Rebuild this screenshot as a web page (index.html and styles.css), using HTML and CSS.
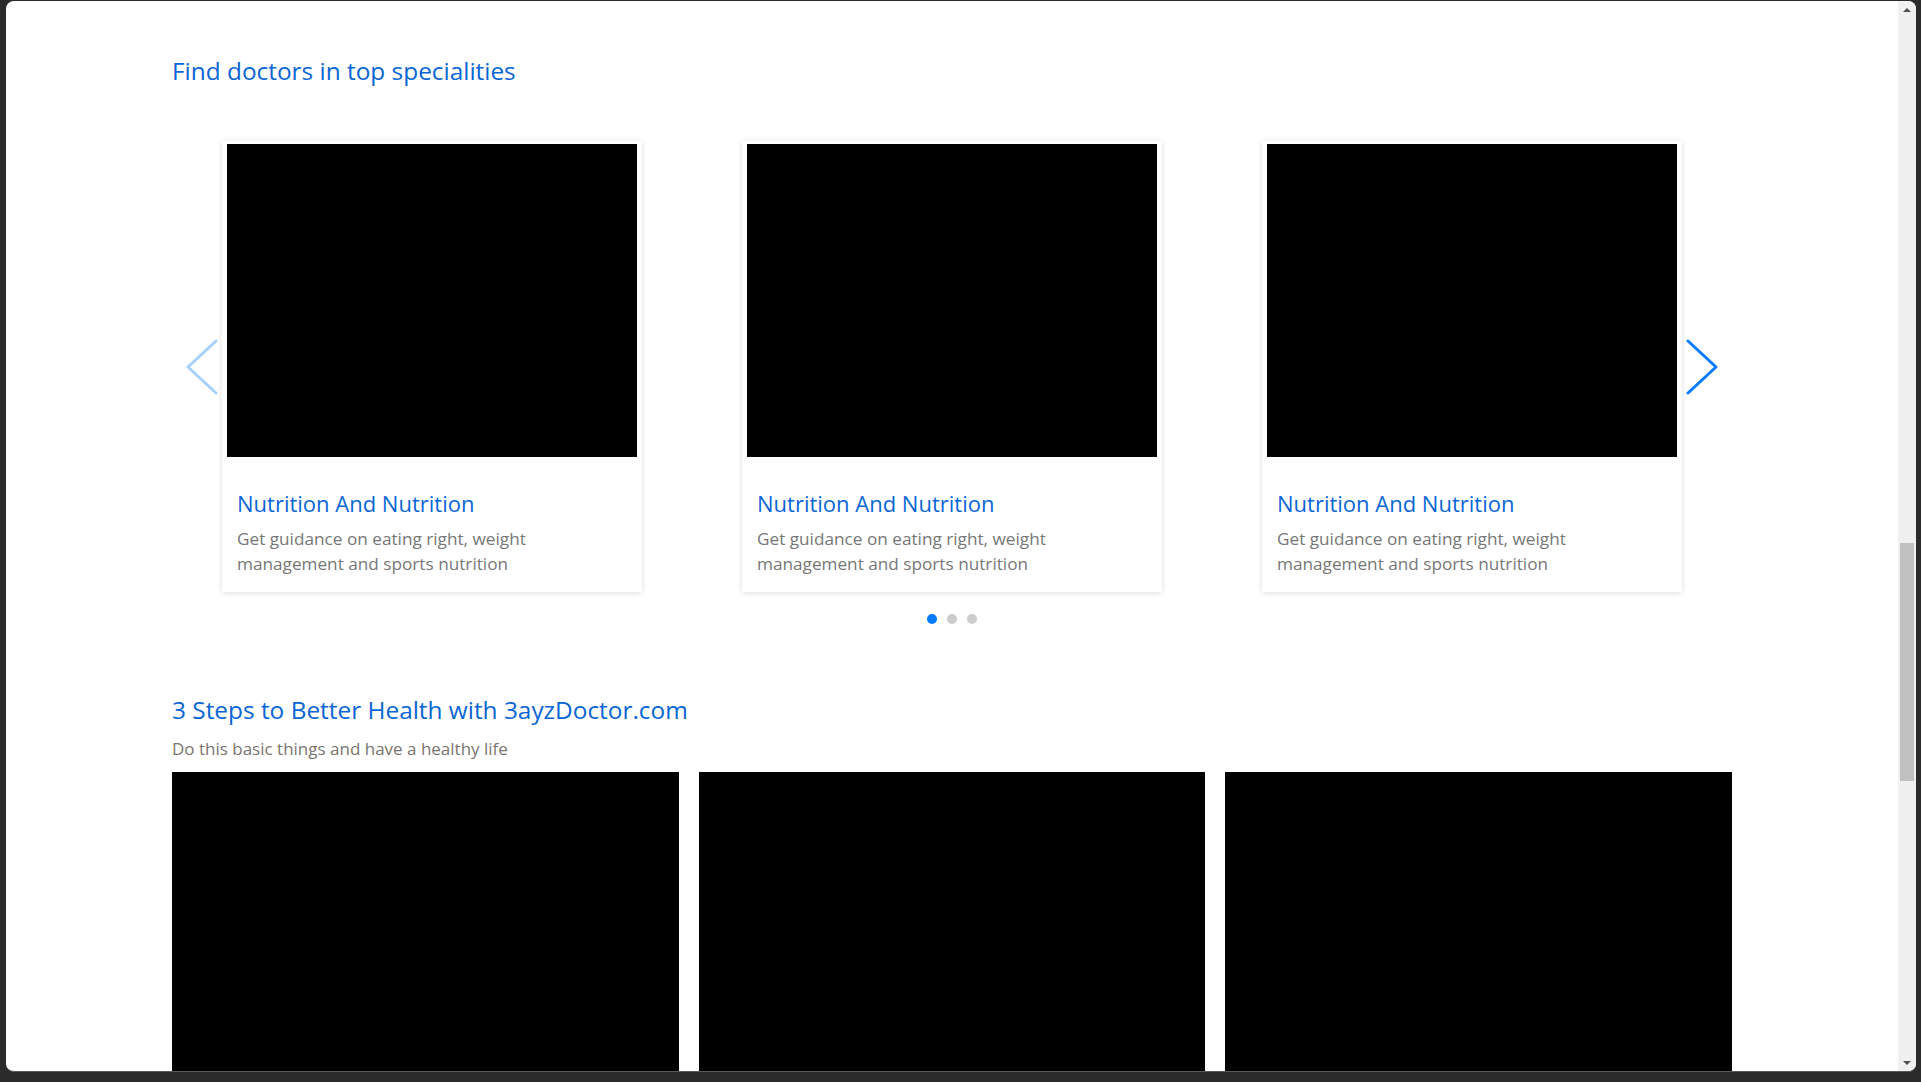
FILE: index.html
```html
<!DOCTYPE html>
<html lang="en">
<head>
<meta charset="utf-8">
<title>3ayzDoctor</title>
<link rel="stylesheet" href="styles.css">
</head>
<body>
<div class="window">
  <div class="viewport">
    <section class="specialities">
      <div class="container">
        <h2 class="section-title">Find doctors in top specialities</h2>
        <div class="carousel">
          <div class="carousel-stage">
            <div class="track">
              <div class="slide">
                <div class="card">
                  <div class="card-img"></div>
                  <div class="card-body">
                    <h3 class="card-title">Nutrition And Nutrition</h3>
                    <p class="card-text">Get guidance on eating right, weight management and sports nutrition</p>
                  </div>
                </div>
              </div>
              <div class="slide">
                <div class="card">
                  <div class="card-img"></div>
                  <div class="card-body">
                    <h3 class="card-title">Nutrition And Nutrition</h3>
                    <p class="card-text">Get guidance on eating right, weight management and sports nutrition</p>
                  </div>
                </div>
              </div>
              <div class="slide">
                <div class="card">
                  <div class="card-img"></div>
                  <div class="card-body">
                    <h3 class="card-title">Nutrition And Nutrition</h3>
                    <p class="card-text">Get guidance on eating right, weight management and sports nutrition</p>
                  </div>
                </div>
              </div>
            </div>
            <button class="nav nav-prev" aria-label="Previous">
              <svg width="32" height="56" viewBox="0 0 32 56"><path d="M30 2 L2 28 L30 54" fill="none" stroke="currentColor" stroke-width="3" stroke-linecap="round" stroke-linejoin="round"/></svg>
            </button>
            <button class="nav nav-next" aria-label="Next">
              <svg width="32" height="56" viewBox="0 0 32 56"><path d="M2 2 L30 28 L2 54" fill="none" stroke="currentColor" stroke-width="3" stroke-linecap="round" stroke-linejoin="round"/></svg>
            </button>
          </div>
          <div class="dots">
            <span class="dot active"></span>
            <span class="dot"></span>
            <span class="dot"></span>
          </div>
        </div>
      </div>
    </section>
    <section class="steps">
      <div class="container">
        <h2 class="section-title">3 Steps to Better Health with 3ayzDoctor.com</h2>
        <p class="section-sub">Do this basic things and have a healthy life</p>
        <div class="step-grid">
          <div class="step-img"></div>
          <div class="step-img"></div>
          <div class="step-img"></div>
        </div>
      </div>
    </section>
  </div>
  <div class="scrollbar">
    <div class="sb-btn"><span class="tri-up"></span></div>
    <div class="sb-track"><div class="sb-thumb"></div></div>
    <div class="sb-btn"><span class="tri-down"></span></div>
  </div>
</div>
</body>
</html>
```

FILE: styles.css
```css
* { box-sizing: border-box; }

html, body {
  margin: 0;
  height: 1082px;
  overflow: hidden;
}

body {
  background: #2b2b2b;
  font-family: "Open Sans", "Noto Sans", sans-serif;
}

.window {
  margin: 1px 5px 0 6px;
  height: 1071px;
  background: #fff;
  border-radius: 8px;
  overflow: hidden;
  display: flex;
  border-bottom: 1px solid #5a5a5a;
}

.viewport {
  flex: 1;
  overflow: hidden;
}

.container {
  width: 1560px;
  margin: 0 auto;
}

.specialities {
  padding-top: 55px;
}

.section-title {
  margin: 0;
  font-size: 24.4px;
  line-height: 30px;
  font-weight: 400;
  color: #0a66d4;
}

.carousel {
  margin-top: 55px;
}

.carousel-stage {
  position: relative;
}

.track {
  display: flex;
}

.slide {
  width: 520px;
  padding: 0 50px;
}

.card {
  background: #fff;
  padding: 3px 5px 0;
  box-shadow: 0 1px 6px rgba(0, 0, 0, 0.13);
}

.card-img {
  height: 313px;
  background: #000;
}

.card-body {
  padding: 33px 10px 16px;
}

.card-title {
  margin: 0;
  font-size: 22px;
  line-height: 26px;
  font-weight: 400;
  color: #0a66d4;
}

.card-text {
  margin: 10px 0 0;
  font-size: 17.2px;
  line-height: 25px;
  color: #777;
}

.nav {
  position: absolute;
  top: 50%;
  transform: translateY(-50%);
  border: 0;
  background: transparent;
  padding: 0;
  width: 32px;
  height: 56px;
  color: #007bff;
  cursor: pointer;
}

.nav svg { display: block; }

.nav-prev {
  left: 14px;
  opacity: 0.35;
}

.nav-next {
  right: 14px;
}

.dots {
  display: flex;
  justify-content: center;
  gap: 10px;
  margin-top: 22px;
}

.dot {
  width: 10px;
  height: 10px;
  border-radius: 50%;
  background: #ccc;
}

.dot.active {
  background: #007bff;
}

.steps {
  padding-top: 70.5px;
}

.section-sub {
  margin: 11px 0 0;
  font-size: 17px;
  line-height: 25px;
  color: #7a7570;
}

.step-grid {
  margin-top: 11.5px;
  display: grid;
  grid-template-columns: repeat(3, 1fr);
  gap: 20px;
}

.step-img {
  height: 420px;
  background: #000;
}

.scrollbar {
  width: 18px;
  background: #f0f0f0;
  display: flex;
  flex-direction: column;
}

.sb-btn {
  height: 17px;
  display: flex;
  align-items: center;
  justify-content: center;
}

.tri-up {
  width: 0;
  height: 0;
  border-left: 4px solid transparent;
  border-right: 4px solid transparent;
  border-bottom: 4px solid #505050;
}

.tri-down {
  width: 0;
  height: 0;
  border-left: 4px solid transparent;
  border-right: 4px solid transparent;
  border-top: 4px solid #505050;
}

.sb-track {
  flex: 1;
  padding: 0 2px;
}

.sb-thumb {
  margin-top: 525px;
  height: 238px;
  background: #c1c1c1;
}
```
